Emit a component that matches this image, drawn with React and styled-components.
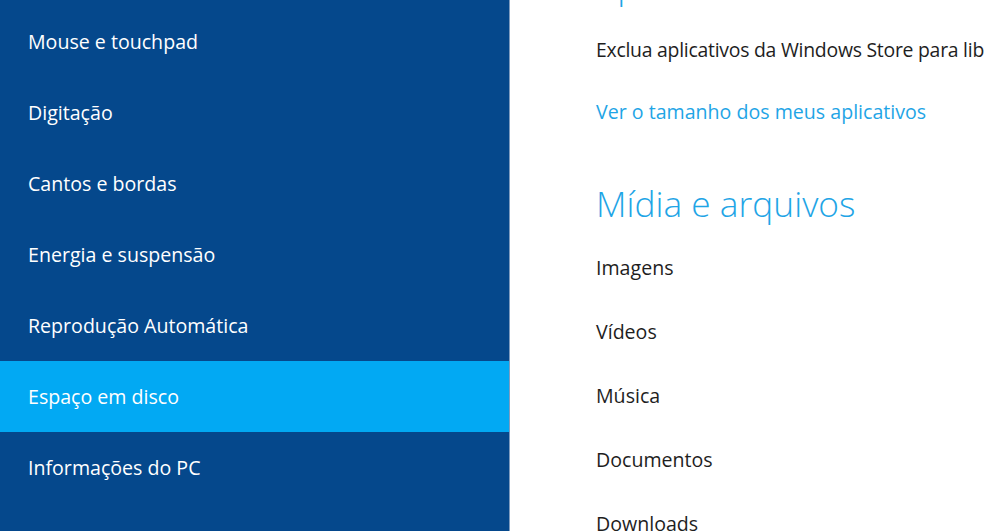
import styled, { createGlobalStyle } from "styled-components";

const GlobalStyle = createGlobalStyle`
body{
  margin:0;
  background:#ffffff;
  overflow:hidden;
  font-family:"Open Sans","Noto Sans",sans-serif;
}
`

const navItems = [
  "Mouse e touchpad",
  "Digitação",
  "Cantos e bordas",
  "Energia e suspensão",
  "Reprodução Automática",
  "Espaço em disco",
  "Informações do PC",
];

const mediaItems = ["Imagens", "Vídeos", "Música", "Documentos", "Downloads"];

const App = () => {
  return (
    <>
      <GlobalStyle />
      <Page>
        <Sidebar>
          {navItems.map((item) => (
            <NavItem key={item} $active={item === "Espaço em disco"}>
              {item}
            </NavItem>
          ))}
        </Sidebar>
        <Main>
          <Content>
            <SectionTitle $clipped>Aplicativos</SectionTitle>
            <Description>
              Exclua aplicativos da Windows Store para liberar espaço em disco.
            </Description>
            <LinkText>Ver o tamanho dos meus aplicativos</LinkText>
            <SectionTitle>Mídia e arquivos</SectionTitle>
            <ItemList>
              {mediaItems.map((item) => (
                <Item key={item}>{item}</Item>
              ))}
            </ItemList>
          </Content>
        </Main>
      </Page>
    </>
  )
}

const Page = styled.div`
display:flex;
height:531px;
width:984px;
overflow:hidden;
`

const Sidebar = styled.nav`
width:510px;
flex-shrink:0;
background-color:#05488c;
border-right:1px solid #7f9cbf;
padding-top:6px;
box-sizing:border-box;
`

const NavItem = styled.div`
height:71px;
display:flex;
align-items:center;
padding-left:28px;
color:#ffffff;
font-size:19.6px;
background-color:${(p) => (p.$active ? "#02a9f3" : "transparent")};
`

const Main = styled.main`
flex:1;
overflow:hidden;
padding-left:86px;
`

const Content = styled.div`
white-space:nowrap;
`

const SectionTitle = styled.h2`
margin:${(p) => (p.$clipped ? "-37px 0 0" : "55px 0 0")};
font-size:35.3px;
line-height:44px;
font-weight:300;
color:#1fa5e6;
`

const Description = styled.p`
margin:29px 0 0;
font-size:19.4px;
letter-spacing:-0.25px;
line-height:28px;
color:#1e1e1e;
`

const LinkText = styled.a`
display:block;
margin-top:34px;
font-size:19.6px;
line-height:28px;
color:#1fa5e6;
`

const ItemList = styled.div`
margin-top:10px;
`

const Item = styled.div`
height:64px;
display:flex;
align-items:center;
font-size:19.6px;
color:#1e1e1e;
`

export default App
